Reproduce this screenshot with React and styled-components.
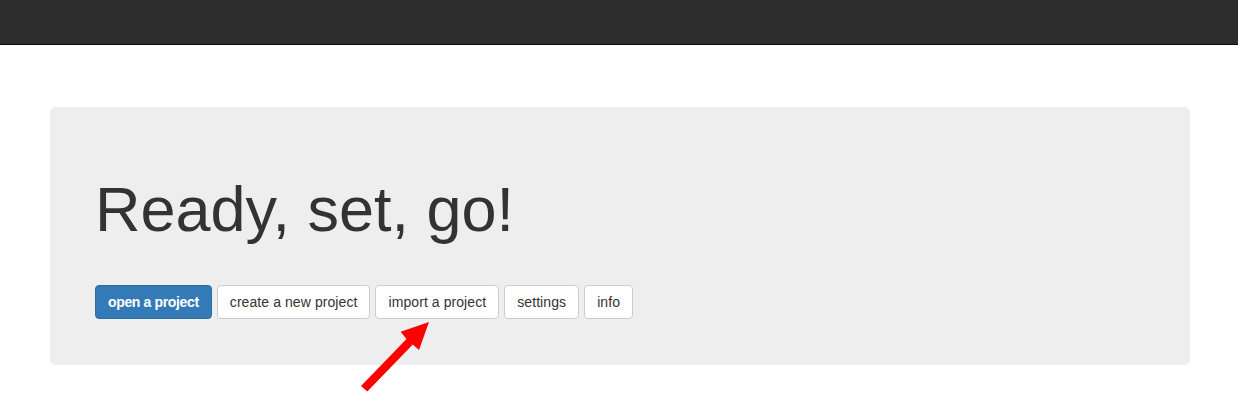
import React from "react";
import styled, { createGlobalStyle } from "styled-components";

const Global = createGlobalStyle`
  html, body { margin: 0; padding: 0; background: #fff; }
  body {
    font-family: "Liberation Sans", Arial, sans-serif;
    font-size: 14px;
    color: #333;
  }
`;

const Page = styled.div`
  position: relative;
  width: 1238px;
  height: 403px;
  overflow: hidden;
`;

const Navbar = styled.div`
  height: 44px;
  background: #2d2d2d;
  border-bottom: 1px solid #080808;
`;

const Jumbotron = styled.div`
  margin: 62px 0 0 50px;
  width: 1140px;
  box-sizing: border-box;
  padding: 68px 45px 46px 45px;
  background: #eee;
  border-radius: 6px;
  display: flex;
  flex-direction: column;
  align-items: flex-start;
`;

const Title = styled.h1`
  margin: 0;
  font-size: 63px;
  line-height: 69px;
  font-weight: 400;
  color: #333;
`;

const ButtonRow = styled.div`
  margin-top: 41px;
  display: flex;
  gap: 5px;
`;

const Button = styled.button`
  box-sizing: border-box;
  height: 34px;
  padding: 6px 12px;
  font-family: "Liberation Sans", Arial, sans-serif;
  font-size: 14px;
  line-height: 20px;
  font-weight: ${(p) => (p.$primary ? 700 : 400)};
  letter-spacing: ${(p) => (p.$primary ? "-0.35px" : "0.08px")};
  color: ${(p) => (p.$primary ? "#fff" : "#333")};
  background: ${(p) => (p.$primary ? "#337ab7" : "#fff")};
  border: 1px solid ${(p) => (p.$primary ? "#2e6da4" : "#ccc")};
  border-radius: 4px;
  white-space: nowrap;
  cursor: pointer;
`;

const Arrow = styled.svg`
  position: absolute;
  left: 0;
  top: 0;
  pointer-events: none;
`;

export default function App() {
  return (
    <Page>
      <Global />
      <Navbar />
      <Jumbotron>
        <Title>Ready, set, go!</Title>
        <ButtonRow>
          <Button $primary>open a project</Button>
          <Button>create a new project</Button>
          <Button>import a project</Button>
          <Button>settings</Button>
          <Button>info</Button>
        </ButtonRow>
      </Jumbotron>
      <Arrow width="1238" height="403" viewBox="0 0 1238 403">
        <polygon
          fill="#ff0000"
          points="429,322 400.7,331.7 406.5,339 361,386 367.3,391.5 412.8,344.5 419,350"
        />
      </Arrow>
    </Page>
  );
}
